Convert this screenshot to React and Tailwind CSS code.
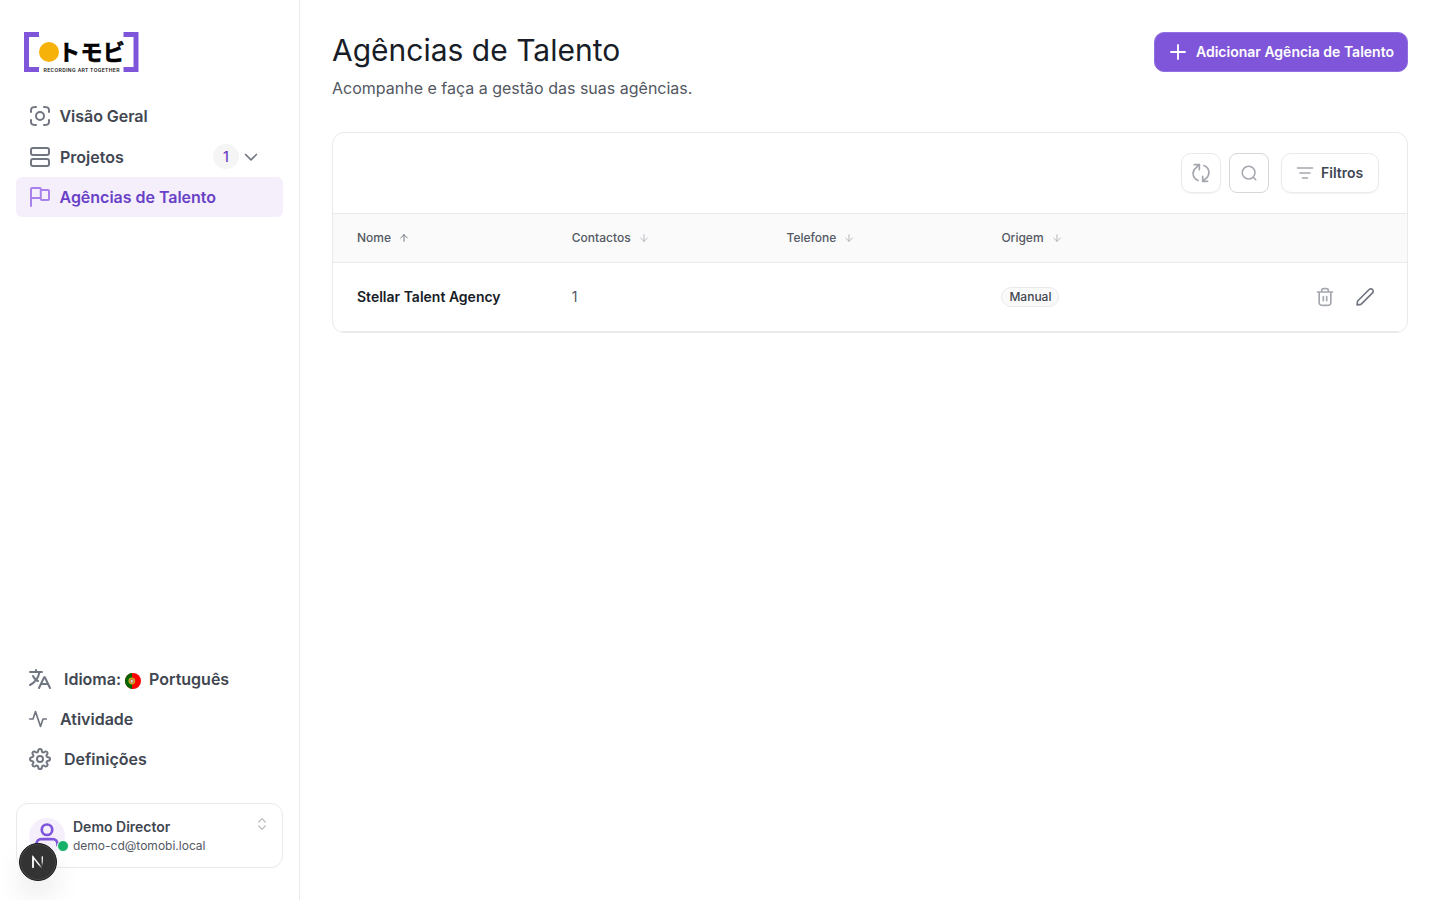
import React from "react";

const GEAR =
  "M19.4 15a1.65 1.65 0 0 0 .33 1.82l.06.06a2 2 0 0 1 0 2.83 2 2 0 0 1-2.83 0l-.06-.06a1.65 1.65 0 0 0-1.82-.33 1.65 1.65 0 0 0-1 1.51V21a2 2 0 0 1-2 2 2 2 0 0 1-2-2v-.09A1.65 1.65 0 0 0 9 19.4a1.65 1.65 0 0 0-1.82.33l-.06.06a2 2 0 0 1-2.83 0 2 2 0 0 1 0-2.83l.06-.06a1.65 1.65 0 0 0 .33-1.82 1.65 1.65 0 0 0-1.51-1H3a2 2 0 0 1-2-2 2 2 0 0 1 2-2h.09A1.65 1.65 0 0 0 4.6 9a1.65 1.65 0 0 0-.33-1.82l-.06-.06a2 2 0 0 1 0-2.83 2 2 0 0 1 2.83 0l.06.06a1.65 1.65 0 0 0 1.82.33H9a1.65 1.65 0 0 0 1-1.51V3a2 2 0 0 1 2-2 2 2 0 0 1 2 2v.09a1.65 1.65 0 0 0 1 1.51 1.65 1.65 0 0 0 1.82-.33l.06-.06a2 2 0 0 1 2.83 0 2 2 0 0 1 0 2.83l-.06.06a1.65 1.65 0 0 0-.33 1.82V9a1.65 1.65 0 0 0 1.51 1H21a2 2 0 0 1 2 2 2 2 0 0 1-2 2h-.09a1.65 1.65 0 0 0-1.51 1z";

function Icon({ className, children, strokeWidth = 2 }) {
  return (
    <svg
      viewBox="0 0 24 24"
      fill="none"
      stroke="currentColor"
      strokeWidth={strokeWidth}
      strokeLinecap="round"
      strokeLinejoin="round"
      className={`shrink-0 ${className}`}
    >
      {children}
    </svg>
  );
}

function Logo() {
  return (
    <svg viewBox="0 0 115 40" className="h-10 w-[115px]">
      <path d="M15 0H0V40H15V35H5V5H15Z" fill="#7f56d9" />
      <path d="M99.500 0H114.500V40H99.500V35H109.500V5H99.500Z" fill="#7f56d9" />
      <circle cx="25" cy="20" r="10" fill="#f7b209" />
      <text
        x="34"
        y="28.200"
        fontSize="22"
        textLength="66.800"
        lengthAdjust="spacing"
        fill="#000"
        className="font-['Noto_Sans_CJK_JP',sans-serif] font-bold"
        stroke="#000"
        strokeWidth="0.600"
      >
        トモビ
      </text>
      <text
        x="19.500"
        y="39.500"
        fontSize="5.300"
        textLength="76"
        lengthAdjust="spacing"
        fill="#111"
        className="font-['Roboto',sans-serif] font-medium"
      >
        RECORDING ART TOGETHER
      </text>
    </svg>
  );
}

function PortugalFlag() {
  return (
    <svg viewBox="0 0 16 16" className="mx-1 mt-1 size-4 shrink-0">
      <circle cx="8" cy="8" r="8" fill="#f00" />
      <path d="M7 0.060A8 8 0 0 0 7 15.940Z" fill="#060" />
      <circle cx="6.800" cy="8" r="2.800" fill="#b8842a" stroke="#c9a81c" strokeWidth="1.200" />
      <path d="M5.200 6.300h3.200v2.200a1.600 1.600 0 0 1-3.200 0Z" fill="#e07070" />
      <path d="M5.900 6.900h1.800v1.600a.9.900 0 0 1-1.800 0Z" fill="#cdd" />
    </svg>
  );
}

function SortArrow({ up }) {
  return (
    <Icon className={up ? "ml-2 size-[10px] text-[#5d626d]" : "ml-2 size-[10px] text-[#a9acb3]"}>
      <path d={up ? "M12 20V4M4 12l8-8 8 8" : "M12 4v16M20 12l-8 8-8-8"} />
    </Icon>
  );
}

function Sidebar() {
  return (
    <aside className="flex h-full w-[300px] shrink-0 flex-col border-r border-[#e9eaeb] px-4 pt-8 pb-8">
      <div className="pl-2">
        <Logo />
      </div>
      <nav className="mt-6 flex flex-col font-semibold text-[#414651]">
        <a className="flex h-10 items-center gap-[7.500px] px-3">
          <Icon className="size-6 text-[#717680]">
            <path d="M8 3H7.800C6.120 3 5.280 3 4.638 3.327a3 3 0 0 0-1.311 1.311C3 5.280 3 6.120 3 7.800V8M8 21H7.800c-1.680 0-2.520 0-3.162-.327a3 3 0 0 1-1.311-1.311C3 18.720 3 17.880 3 16.200V16M21 8V7.800c0-1.680 0-2.520-.327-3.162a3 3 0 0 0-1.311-1.311C18.720 3 17.880 3 16.200 3H16M21 16v.200c0 1.680 0 2.520-.327 3.162a3 3 0 0 1-1.311 1.311C18.720 21 17.880 21 16.200 21H16" />
            <circle cx="12" cy="12" r="4" />
          </Icon>
          <span className="tracking-[-0.04px]">Visão Geral</span>
        </a>
        <a className="flex h-[41px] items-center gap-2 pr-[22px] pl-3">
          <Icon className="size-6 text-[#717680]">
            <rect x="3" y="3" width="18" height="7" rx="2" />
            <rect x="3" y="14" width="18" height="7" rx="2" />
          </Icon>
          <span className="flex-1">Projetos</span>
          <span className="-mr-[6px] flex h-[25px] w-[26px] items-center justify-center rounded-full bg-[#f5f5f5] text-sm font-medium text-[#6941c6]">
            1
          </span>
          <Icon className="size-5 text-[#717680]">
            <path d="M5.500 9l6.500 6.500 6.500-6.500" />
          </Icon>
        </a>
        <a className="flex h-10 items-center gap-[7.500px] rounded-md bg-[#f5effc] px-3 text-[#6941c6]">
          <Icon className="size-6 text-[#a882ea]">
            <path d="M12.800 5H20c.6 0 1 .4 1 1v8c0 .6-.4 1-1 1h-6.200c-.6 0-1-.4-1-1v-1M3 21V4c0-.6.400-1 1-1h7.800c.6 0 1 .4 1 1v8c0 .6-.4 1-1 1H3" />
          </Icon>
          <span className="tracking-[-0.02px]">Agências de Talento</span>
        </a>
      </nav>
      <div className="mt-auto flex flex-col font-semibold text-[#414651]">
        <a className="flex h-10 items-center px-3">
          <Icon className="mr-3 size-6 text-[#717680]">
            <path d="M12.913 17H20.087M12.913 17L11 21M12.913 17L15.778 11.009C16.009 10.526 16.125 10.285 16.283 10.209C16.420 10.142 16.580 10.142 16.717 10.209C16.875 10.285 16.991 10.526 17.222 11.009L20.087 17M20.087 17L22 21M2 5H8M8 5H11.500M8 5V3M11.500 5H14M11.500 5C11.004 7.957 9.853 10.636 8.166 12.884M10 14C9.387 13.725 8.763 13.342 8.166 12.884M8.166 12.884C6.813 11.848 5.603 10.427 5 9M8.166 12.884C6.561 15.023 4.471 16.772 2 18" />
          </Icon>
          <span>Idioma:</span>
          <PortugalFlag />
          <span className="ml-1">Português</span>
        </a>
        <a className="flex h-10 items-center gap-3 px-3">
          <Icon className="size-5 text-[#717680]">
            <path d="M22 12H18L15 21L9 3L6 12H2" />
          </Icon>
          <span>Atividade</span>
        </a>
        <a className="flex h-10 items-center gap-3 px-3">
          <Icon className="size-6 text-[#717680]" strokeWidth={2.2}>
            <g transform="translate(1.090 1.090) scale(0.909)">
              <path d={GEAR} />
              <circle cx="12" cy="12" r="3.300" />
            </g>
          </Icon>
          <span>Definições</span>
        </a>
      </div>
      <div className="relative mt-6 flex h-[65px] w-[267px] rounded-xl border border-[#e9eaeb] py-3.5 pr-3 pl-3">
        <div className="relative flex size-9 items-center justify-center rounded-full bg-[#f5effc]">
          <Icon className="mb-[3px] size-7 text-[#7f56d9]" strokeWidth={2.3}>
            <path d="M21 21c0-1.396 0-2.093-.172-2.661a4 4 0 0 0-2.667-2.667C17.593 15.500 16.896 15.500 15.500 15.500h-7c-1.396 0-2.093 0-2.661.172a4 4 0 0 0-2.667 2.667C3 18.907 3 19.604 3 21M16.500 7.500a4.500 4.500 0 1 1-9 0 4.500 4.500 0 0 1 9 0Z" />
          </Icon>
          <span className="absolute -right-1 bottom-[2px] size-3 rounded-full border border-white bg-[#17b26a]" />
        </div>
        <div className="ml-2 flex-1">
          <p className="text-sm leading-[18px] font-semibold text-[#414651]">Demo Director</p>
          <p className="text-xs leading-5 text-[#535862]">demo-cd@tomobi.local</p>
        </div>
        <Icon className="-mt-0.5 size-4 text-[#b4b7bd]" strokeWidth={1.6}>
          <path d="M7 15l5 5 5-5M7 9l5-5 5 5" />
        </Icon>
        <div className="absolute top-[39px] left-[2px] flex size-[38px] items-center justify-center rounded-full border border-[#191919] bg-[#333] shadow-[inset_0_0_0_1px_#484848,0_16px_32px_-8px_rgba(0,0,0,0.24)]">
          <svg viewBox="0 0 14 14" className="size-3.5" fill="none">
            <defs>
              <linearGradient id="stem" x1="0" y1="0" x2="0" y2="1">
                <stop offset="0" stopColor="#fff" />
                <stop offset="0.600" stopColor="#fff" stopOpacity="0.700" />
                <stop offset="1" stopColor="#fff" stopOpacity="0" />
              </linearGradient>
              <linearGradient id="slash" gradientUnits="userSpaceOnUse" x1="2" y1="2" x2="11.500" y2="13">
                <stop offset="0.650" stopColor="#fff" />
                <stop offset="1" stopColor="#fff" stopOpacity="0" />
              </linearGradient>
            </defs>
            <path d="M2 12.800V2L11.300 13.600" stroke="url(#slash)" strokeWidth="1.400" />
            <path d="M2 12.800V1.600" stroke="#fff" strokeWidth="1.400" />
            <rect x="10.600" y="1.400" width="1.400" height="9.500" fill="url(#stem)" />
          </svg>
        </div>
      </div>
    </aside>
  );
}

const COLUMNS = ["Nome", "Contactos", "Telefone", "Origem"];

export default function App() {
  return (
    <div className="flex h-[900px] w-[1440px] overflow-hidden bg-white font-['Inter',sans-serif] text-base">
      <Sidebar />
      <main className="flex-1 p-8">
        <header className="flex items-start justify-between">
          <div>
            <h1 className="text-[30px] leading-9 text-[#181d27]">Agências de Talento</h1>
            <p className="mt-2 leading-6 text-[#535862]">Acompanhe e faça a gestão das suas agências.</p>
          </div>
          <button className="flex h-10 items-center gap-2 rounded-[10px] border border-[#9070e0] bg-[#7f56d9] px-[13px] text-sm font-semibold text-white">
            <Icon className="size-5" strokeWidth={2.2}>
              <path d="M12 3.600v16.800M3.600 12h16.800" />
            </Icon>
            <span>Adicionar Agência de Talento</span>
          </button>
        </header>
        <section className="mt-8 overflow-hidden rounded-xl border border-[#e9eaeb]">
          <div className="flex h-20 items-center justify-end pr-7">
            <button className="flex size-10 items-center justify-center rounded-[10px] border border-[#e9eaeb] text-[#a4a7ae] shadow-xs">
              <Icon className="size-5">
                <path d="M4 2h6v6M10 2L6.500 5.300C4.200 7 2.500 9 2.500 12.400c0 4 2.400 7.200 6 8.600M20 22h-6v-6M14 22l3.500-3.300c2.300-1.700 4-3.700 4-7.100 0-4-2.400-7.200-6-8.600" />
              </Icon>
            </button>
            <button className="ml-2 flex size-10 items-center justify-center rounded-lg border border-[#d5d7da] text-[#a4a7ae]">
              <Icon className="size-[18px]">
                <path d="M21 21l-3.500-3.500M20 11.500a8.500 8.500 0 1 1-17 0 8.500 8.500 0 0 1 17 0Z" />
              </Icon>
            </button>
            <button className="ml-3 flex h-10 w-[98px] items-center gap-1.5 rounded-[10px] border border-[#e9eaeb] pl-[13px] text-sm font-semibold text-[#414651] shadow-xs">
              <Icon className="size-5 text-[#a4a7ae]">
                <path d="M6 12h12M3 6h18M9 18h6" />
              </Icon>
              <span>Filtros</span>
            </button>
          </div>
          <div className="grid h-[50px] grid-cols-5 items-center border-y border-[#e9eaeb] bg-[#fafafa] text-xs font-medium text-[#535862]">
            {COLUMNS.map((name, i) => (
              <div key={name} className="flex items-center pl-6">
                {name}
                <SortArrow up={i === 0} />
              </div>
            ))}
          </div>
          <div className="grid h-[69px] grid-cols-5 items-center border-b border-[#e9eaeb] text-sm text-[#535862]">
            <div className="pl-6 font-semibold text-[#181d27]">Stellar Talent Agency</div>
            <div className="pl-6">1</div>
            <div />
            <div className="flex pl-6">
              <span className="flex h-5 items-center rounded-full border border-[#e9eaeb] bg-[#fafafa] px-[7px] text-xs font-medium text-[#414651]">
                Manual
              </span>
            </div>
            <div className="flex justify-end gap-5 pr-8">
              <Icon className="size-5 text-[#a4a7ae]">
                <path d="M16 6v-.8c0-1.120 0-1.680-.218-2.108a2 2 0 0 0-.874-.874C14.480 2 13.920 2 12.800 2h-1.600c-1.120 0-1.680 0-2.108.218a2 2 0 0 0-.874.874C8 3.520 8 4.080 8 5.200V6m2 5.500v5m4-5v5M3 6h18m-2 0v11.200c0 1.680 0 2.520-.327 3.162a3 3 0 0 1-1.311 1.311C16.720 22 15.880 22 14.200 22H9.800c-1.680 0-2.520 0-3.162-.327a3 3 0 0 1-1.311-1.311C5 19.720 5 18.880 5 17.200V6" />
              </Icon>
              <Icon className="size-5 text-[#717680]">
                <path d="M2.876 18.116c.046-.414.069-.620.131-.814a2 2 0 0 1 .234-.485c.111-.170.258-.317.553-.611L17 3a2.828 2.828 0 1 1 4 4L7.794 20.206c-.294.294-.442.442-.611.553a2 2 0 0 1-.485.234c-.194.062-.400.085-.814.131L2.500 21.500l.376-3.384Z" />
              </Icon>
            </div>
          </div>
        </section>
      </main>
    </div>
  );
}
